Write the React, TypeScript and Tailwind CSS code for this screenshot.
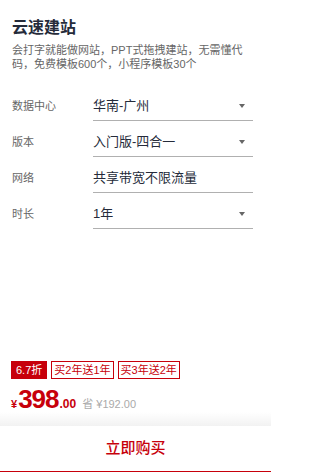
import React from "react";

const rows = [
  { label: "数据中心", value: "华南-广州", arrow: true },
  { label: "版本", value: "入门版-四合一", arrow: true },
  { label: "网络", value: "共享带宽不限流量", arrow: false },
  { label: "时长", value: "1年", arrow: true },
];

export default function App() {
  return (
    <div
      className="h-[472px] w-[271px] flex flex-col bg-white overflow-hidden"
      style={{ fontFamily: '"Liberation Sans","Noto Sans CJK SC",sans-serif' }}
    >
      <div className="px-3 pt-4">
        <div className="text-[16px] leading-[24px] font-bold text-[#252b3a]">云速建站</div>
        <div className="mt-[3px] text-[11px] leading-[14px] text-[#666]">
          会打字就能做网站，PPT式拖拽建站，无需懂代
          <br />
          码，免费模板600个，小程序模板30个
        </div>
      </div>

      <div className="mt-[20px] px-3 flex flex-col gap-[6px]">
        {rows.map((r) => (
          <div key={r.label} className="flex items-center">
            <div className="w-[81px] text-[11px] text-[#666]">{r.label}</div>
            <div className="w-[160px] h-[30px] flex items-center justify-between border-b border-[#b0b0b0] pr-[8px]">
              <span className="text-[13px] text-[#252b3a]">{r.value}</span>
              {r.arrow && (
                <span className="w-0 h-0 border-x-[3px] border-t-[4px] border-x-transparent border-t-[#666]" />
              )}
            </div>
          </div>
        ))}
      </div>

      <div className="flex-1" />

      <div className="px-[11px]">
        <div className="flex gap-[4px]">
          <span className="h-[18px] px-[4px] flex items-center bg-[#c7000b] text-white text-[11px] border border-[#c7000b]">
            6.7折
          </span>
          <span className="h-[18px] px-[2px] flex items-center border border-[#c7000b] text-[#c7000b] text-[11px]">
            买2年送1年
          </span>
          <span className="h-[18px] px-[2px] flex items-center border border-[#c7000b] text-[#c7000b] text-[11px]">
            买3年送2年
          </span>
        </div>
        <div className="mt-[7px] flex items-baseline text-[#c7000b] leading-none">
          <span className="text-[11px] font-bold">¥</span>
          <span className="text-[26px] font-bold tracking-[-1px] ml-[1px]">398</span>
          <span className="text-[12px] font-bold ml-[1px]">.00</span>
          <span className="ml-[6px] text-[11px] text-[#aaa]">省 ¥192.00</span>
        </div>
      </div>
      <div className="h-[14px] bg-linear-to-b from-white to-[#f2f2f2]" />
      <div className="h-[46px] flex items-center justify-center border-b border-[#c7000b] text-[15px] font-medium text-[#c7000b]">
        立即购买
      </div>
    </div>
  );
}
